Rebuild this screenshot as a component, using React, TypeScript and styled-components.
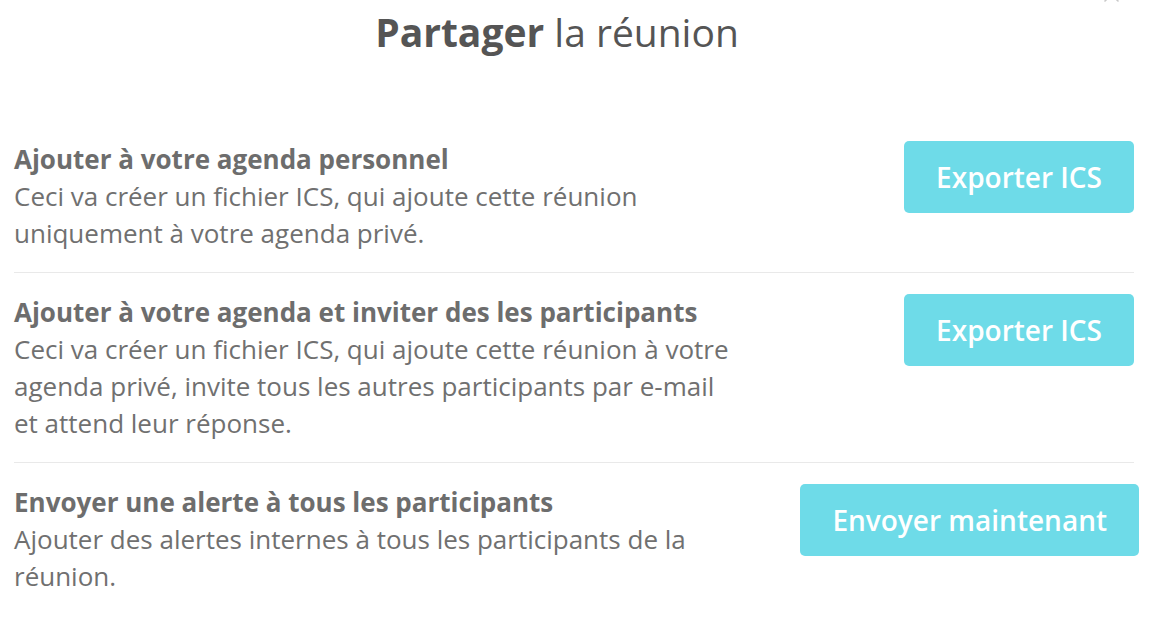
import React from "react";
import styled, { createGlobalStyle } from "styled-components";

const GlobalStyle = createGlobalStyle`
	html, body {
		margin: 0;
		padding: 0;
		background: #ffffff;
	}
	body {
		font-family: "Open Sans", "Liberation Sans", sans-serif;
		overflow: hidden;
	}
`;

const Modal = styled.div`
	position: relative;
	width: 1164px;
	height: 634px;
	box-sizing: border-box;
	padding: 9px 30px 0 14px;
	background: #ffffff;
`;

const CloseIcon = styled.svg`
	position: absolute;
	top: -12px;
	left: 1104px;
	width: 15px;
	height: 14px;
`;

const Heading = styled.h1`
	margin: 0 0 65px;
	padding-right: 34px;
	text-align: center;
	font-size: 39px;
	line-height: 46px;
	font-weight: 400;
	color: #555555;

	strong {
		font-weight: 700;
	}
`;

const Row = styled.div<{ last?: boolean }>`
	display: flex;
	justify-content: space-between;
	align-items: flex-start;
	padding: 21px 0 20px;
	border-bottom: ${({ last }) => (last ? "none" : "1px solid #e9e9e9")};
`;

const TextBlock = styled.div`
	max-width: 726px;
	font-size: 26px;
	line-height: 37px;
	color: #707070;
`;

const RowTitle = styled.div`
	font-weight: 700;
	color: #6d6d6d;
`;

const RowText = styled.div`
	font-weight: 400;
`;

const ActionButton = styled.button<{ offset?: number }>`
	flex-shrink: 0;
	height: 72px;
	margin-right: ${({ offset }) => (offset ? `-${offset}px` : "0")};
	padding: 0 32px;
	border: none;
	border-radius: 5px;
	background: #6edbe8;
	color: #ffffff;
	font-family: "Open Sans", "Liberation Sans", sans-serif;
	font-size: 28px;
	font-weight: 600;
	cursor: pointer;
`;

const rows = [
	{
		title: "Ajouter à votre agenda personnel",
		text: "Ceci va créer un fichier ICS, qui ajoute cette réunion uniquement à votre agenda privé.",
		action: "Exporter ICS",
	},
	{
		title: "Ajouter à votre agenda et inviter des les participants",
		text: "Ceci va créer un fichier ICS, qui ajoute cette réunion à votre agenda privé, invite tous les autres participants par e-mail et attend leur réponse.",
		action: "Exporter ICS",
	},
	{
		title: "Envoyer une alerte à tous les participants",
		text: "Ajouter des alertes internes à tous les participants de la réunion.",
		action: "Envoyer maintenant",
		offset: 5,
	},
];

const App: React.FC = () => {
	return (
		<>
			<GlobalStyle />
			<Modal>
				<CloseIcon viewBox="0 0 15 14" fill="none" stroke="#c8c8c8" strokeWidth="1.6" strokeLinecap="round">
					<line x1="1" y1="0" x2="14" y2="13" />
					<line x1="14" y1="0" x2="1" y2="13" />
				</CloseIcon>
				<Heading>
					<strong>Partager</strong> la réunion
				</Heading>
				{rows.map((row, i) => (
					<Row key={i} last={i === rows.length - 1}>
						<TextBlock>
							<RowTitle>{row.title}</RowTitle>
							<RowText>{row.text}</RowText>
						</TextBlock>
						<ActionButton offset={row.offset}>{row.action}</ActionButton>
					</Row>
				))}
			</Modal>
		</>
	);
};

export default App;
